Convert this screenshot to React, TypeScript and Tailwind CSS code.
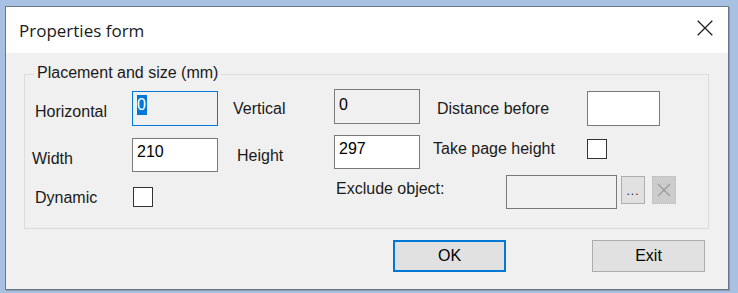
import React from "react";

const font = "font-['Liberation_Sans',Arial,sans-serif]";

function Input({
  w,
  h,
  mt,
  bg = "bg-white",
  border = "border-[#7a7a7a]",
  children,
}: {
  w: string;
  h: string;
  mt: string;
  bg?: string;
  border?: string;
  children?: React.ReactNode;
}) {
  return (
    <div className={`${w} ${h} ${mt} ${bg} border ${border} shrink-0 pl-[4px] pt-[3px] leading-[20px] text-black`}>
      {children}
    </div>
  );
}

function Check({ mt }: { mt: string }) {
  return <div className={`w-[20px] h-[20px] ${mt} shrink-0 bg-white border border-[#333333]`} />;
}

export default function App() {
  return (
    <div className={`w-[738px] h-[293px] bg-[#a8c1e3] overflow-hidden pt-[6px] pl-[5px] ${font} text-[16px] text-[#1a1a1a]`}>
      <div className="w-[724px] h-[284px] border border-[#6b7686] flex flex-col shadow-[1px_1px_0_#8a9ab0]">
        {/* Title bar */}
        <div className="h-[46px] bg-white flex items-center justify-between pl-[13px] pr-[15px] shrink-0">
          <span className="font-['Open_Sans',sans-serif] text-[17px] text-[#1b1b1b] leading-none">Properties form</span>
          <svg width="16" height="16" viewBox="0 0 16 16" className="mt-[-4px]">
            <path d="M0.7 0.7 L15.3 15.3 M15.3 0.7 L0.7 15.3" stroke="#222" strokeWidth="1.3" fill="none" />
          </svg>
        </div>
        {/* Body */}
        <div className="flex-1 bg-[#f0f0f0] pl-[18px] pt-[21px]">
          <div className="relative w-[685px] h-[155px] border border-[#dcdcdc] pt-[14px]">
            <span className="absolute left-[9px] top-[-12px] px-[3px] bg-[#f0f0f0] leading-[20px]">
              Placement and size (mm)
            </span>
            {/* Row 1 */}
            <div className="flex h-[37px] items-start">
              <div className="w-[107px] pl-[10px] mt-[13px] leading-[20px] shrink-0">Horizontal</div>
              <Input w="w-[86px]" h="h-[35px]" mt="mt-[2px]" bg="bg-[#f0f0f0]" border="border-[#0078d7]">
                <span className="bg-[#0078d7] text-white inline-block leading-[20px] pr-[1px]">0</span>
              </Input>
              <div className="w-[116px] pl-[15px] mt-[10px] leading-[20px] shrink-0">Vertical</div>
              <Input w="w-[86px]" h="h-[35px]" mt="mt-0" bg="bg-[#f0f0f0]">
                <span className="inline-block mt-[2px]">0</span>
              </Input>
              <div className="w-[167px] pl-[17px] mt-[10px] leading-[20px] shrink-0">Distance before</div>
              <Input w="w-[73px]" h="h-[35px]" mt="mt-[2px]" />
            </div>
            {/* Row 2 */}
            <div className="flex h-[37px] items-start mt-[9px]">
              <div className="w-[107px] pl-[7px] mt-[14px] leading-[20px] shrink-0">Width</div>
              <Input w="w-[86px]" h="h-[34px]" mt="mt-[3px]">
                210
              </Input>
              <div className="w-[116px] pl-[19px] mt-[11px] leading-[20px] shrink-0">Height</div>
              <Input w="w-[86px]" h="h-[34px]" mt="mt-0">
                297
              </Input>
              <div className="w-[167px] pl-[13px] mt-[4px] leading-[20px] shrink-0">Take page height</div>
              <Check mt="mt-[4px]" />
            </div>
            {/* Row 3 */}
            <div className="flex h-[34px] items-start mt-[3px]">
              <div className="w-[108px] pl-[10px] mt-[13px] leading-[20px] shrink-0">Dynamic</div>
              <Check mt="mt-[12px]" />
              <div className="w-[353px] pl-[183px] mt-[4px] leading-[20px] shrink-0">Exclude object:</div>
              <Input w="w-[111px]" h="h-[34px]" mt="mt-0" bg="bg-[#f0f0f0]" />
              <div className="ml-[4px] mt-[1px] w-[24px] h-[28px] bg-[#e1e1e1] border border-[#adadad] shrink-0 flex items-end justify-center pb-[6px]">
                <span className="text-[12px] leading-none tracking-[1px]">...</span>
              </div>
              <div className="ml-[7px] mt-[1px] w-[24px] h-[28px] bg-[#cccccc] border border-dotted border-[#bfbfbf] shrink-0 flex items-center justify-center">
                <svg width="14" height="14" viewBox="0 0 14 14">
                  <path d="M1 1 L13 13 M13 1 L1 13" stroke="#9a9a9a" strokeWidth="1.2" fill="none" />
                </svg>
              </div>
            </div>
          </div>
          {/* Buttons */}
          <div className="flex mt-[11px]">
            <div className="ml-[369px] w-[113px] h-[32px] bg-[#e1e1e1] border-2 border-[#0078d7] flex items-center justify-center text-black">
              OK
            </div>
            <div className="ml-[86px] w-[113px] h-[32px] bg-[#e1e1e1] border border-[#adadad] flex items-center justify-center text-black">
              Exit
            </div>
          </div>
        </div>
      </div>
    </div>
  );
}
